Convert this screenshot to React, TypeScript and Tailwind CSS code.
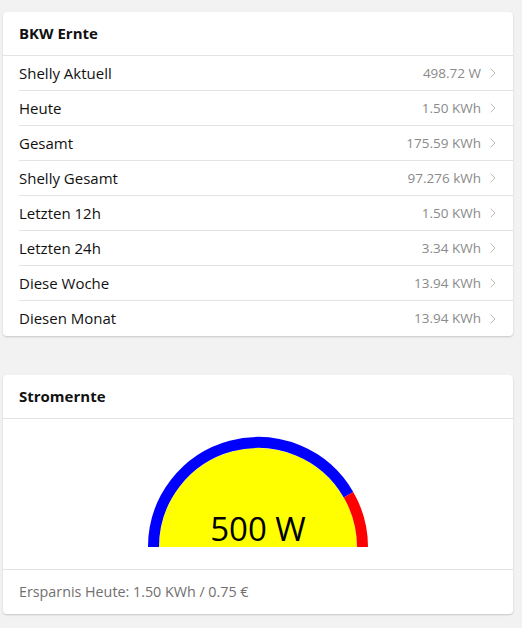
import { ChevronRight } from "lucide-react";

const rows = [
  { label: "Shelly Aktuell", value: "498.72 W" },
  { label: "Heute", value: "1.50 KWh" },
  { label: "Gesamt", value: "175.59 KWh" },
  { label: "Shelly Gesamt", value: "97.276 kWh" },
  { label: "Letzten 12h", value: "1.50 KWh" },
  { label: "Letzten 24h", value: "3.34 KWh" },
  { label: "Diese Woche", value: "13.94 KWh" },
  { label: "Diesen Monat", value: "13.94 KWh" },
];

// point on the gauge circle, angle in degrees (180 = left, 0 = right)
function pt(r: number, deg: number) {
  const a = (deg * Math.PI) / 180;
  return `${(111 + r * Math.cos(a)).toFixed(2)} ${(110 - r * Math.sin(a)).toFixed(2)}`;
}

function Gauge() {
  const r = 104.5;
  return (
    <svg width="222" height="110" viewBox="0 0 222 110" overflow="visible">
      <path d={`M ${pt(99, 180)} A 99 99 0 0 1 ${pt(99, 0)} Z`} fill="#ffff00" />
      <path d={`M ${pt(r, 180)} A ${r} ${r} 0 0 1 ${pt(r, 30)}`} fill="none" stroke="#0000ff" strokeWidth="11" />
      <path d={`M ${pt(r, 30)} A ${r} ${r} 0 0 1 ${pt(r, 0)}`} fill="none" stroke="#ff0000" strokeWidth="11" />
      <text x="111" y="104" textAnchor="middle" fontSize="33" fill="#000" style={{ fontFamily: '"Open Sans", sans-serif' }}>
        500 W
      </text>
    </svg>
  );
}

export default function App() {
  return (
    <div className="min-h-[628px] bg-[#f2f2f2] pt-3 pb-4 font-['Open_Sans',sans-serif] text-[#111]">
      <div className="ml-[3px] w-[510px] rounded bg-white shadow-[0_1px_2px_rgba(0,0,0,0.18)]">
        <div className="flex h-[44px] items-center border-b border-[#e3e3e3] px-4 text-[15px] font-bold">BKW Ernte</div>
        <div className="pl-4">
          {rows.map((row, i) => (
            <div
              key={row.label}
              className={`flex h-[35px] items-center pr-4 ${i < rows.length - 1 ? "border-b border-[#e3e3e3]" : ""}`}
            >
              <span className="flex-1 text-[15px]">{row.label}</span>
              <span className="text-[13.5px] text-[#8a8a8a]">{row.value}</span>
              <ChevronRight className="ml-1 -mr-1 text-[#bdbdbd]" size={16} strokeWidth={1.5} />
            </div>
          ))}
        </div>
      </div>

      <div className="mt-[39px] ml-[3px] w-[510px] rounded bg-white shadow-[0_1px_2px_rgba(0,0,0,0.18)]">
        <div className="flex h-[44px] items-center border-b border-[#e3e3e3] px-4 text-[15px] font-bold">Stromernte</div>
        <div className="flex h-[150px] justify-center pt-[18px]">
          <Gauge />
        </div>
        <div className="flex h-[45px] items-center border-t border-[#e3e3e3] px-4 text-[14.3px] text-[#707070]">
          Ersparnis Heute: 1.50 KWh / 0.75 €
        </div>
      </div>
    </div>
  );
}
